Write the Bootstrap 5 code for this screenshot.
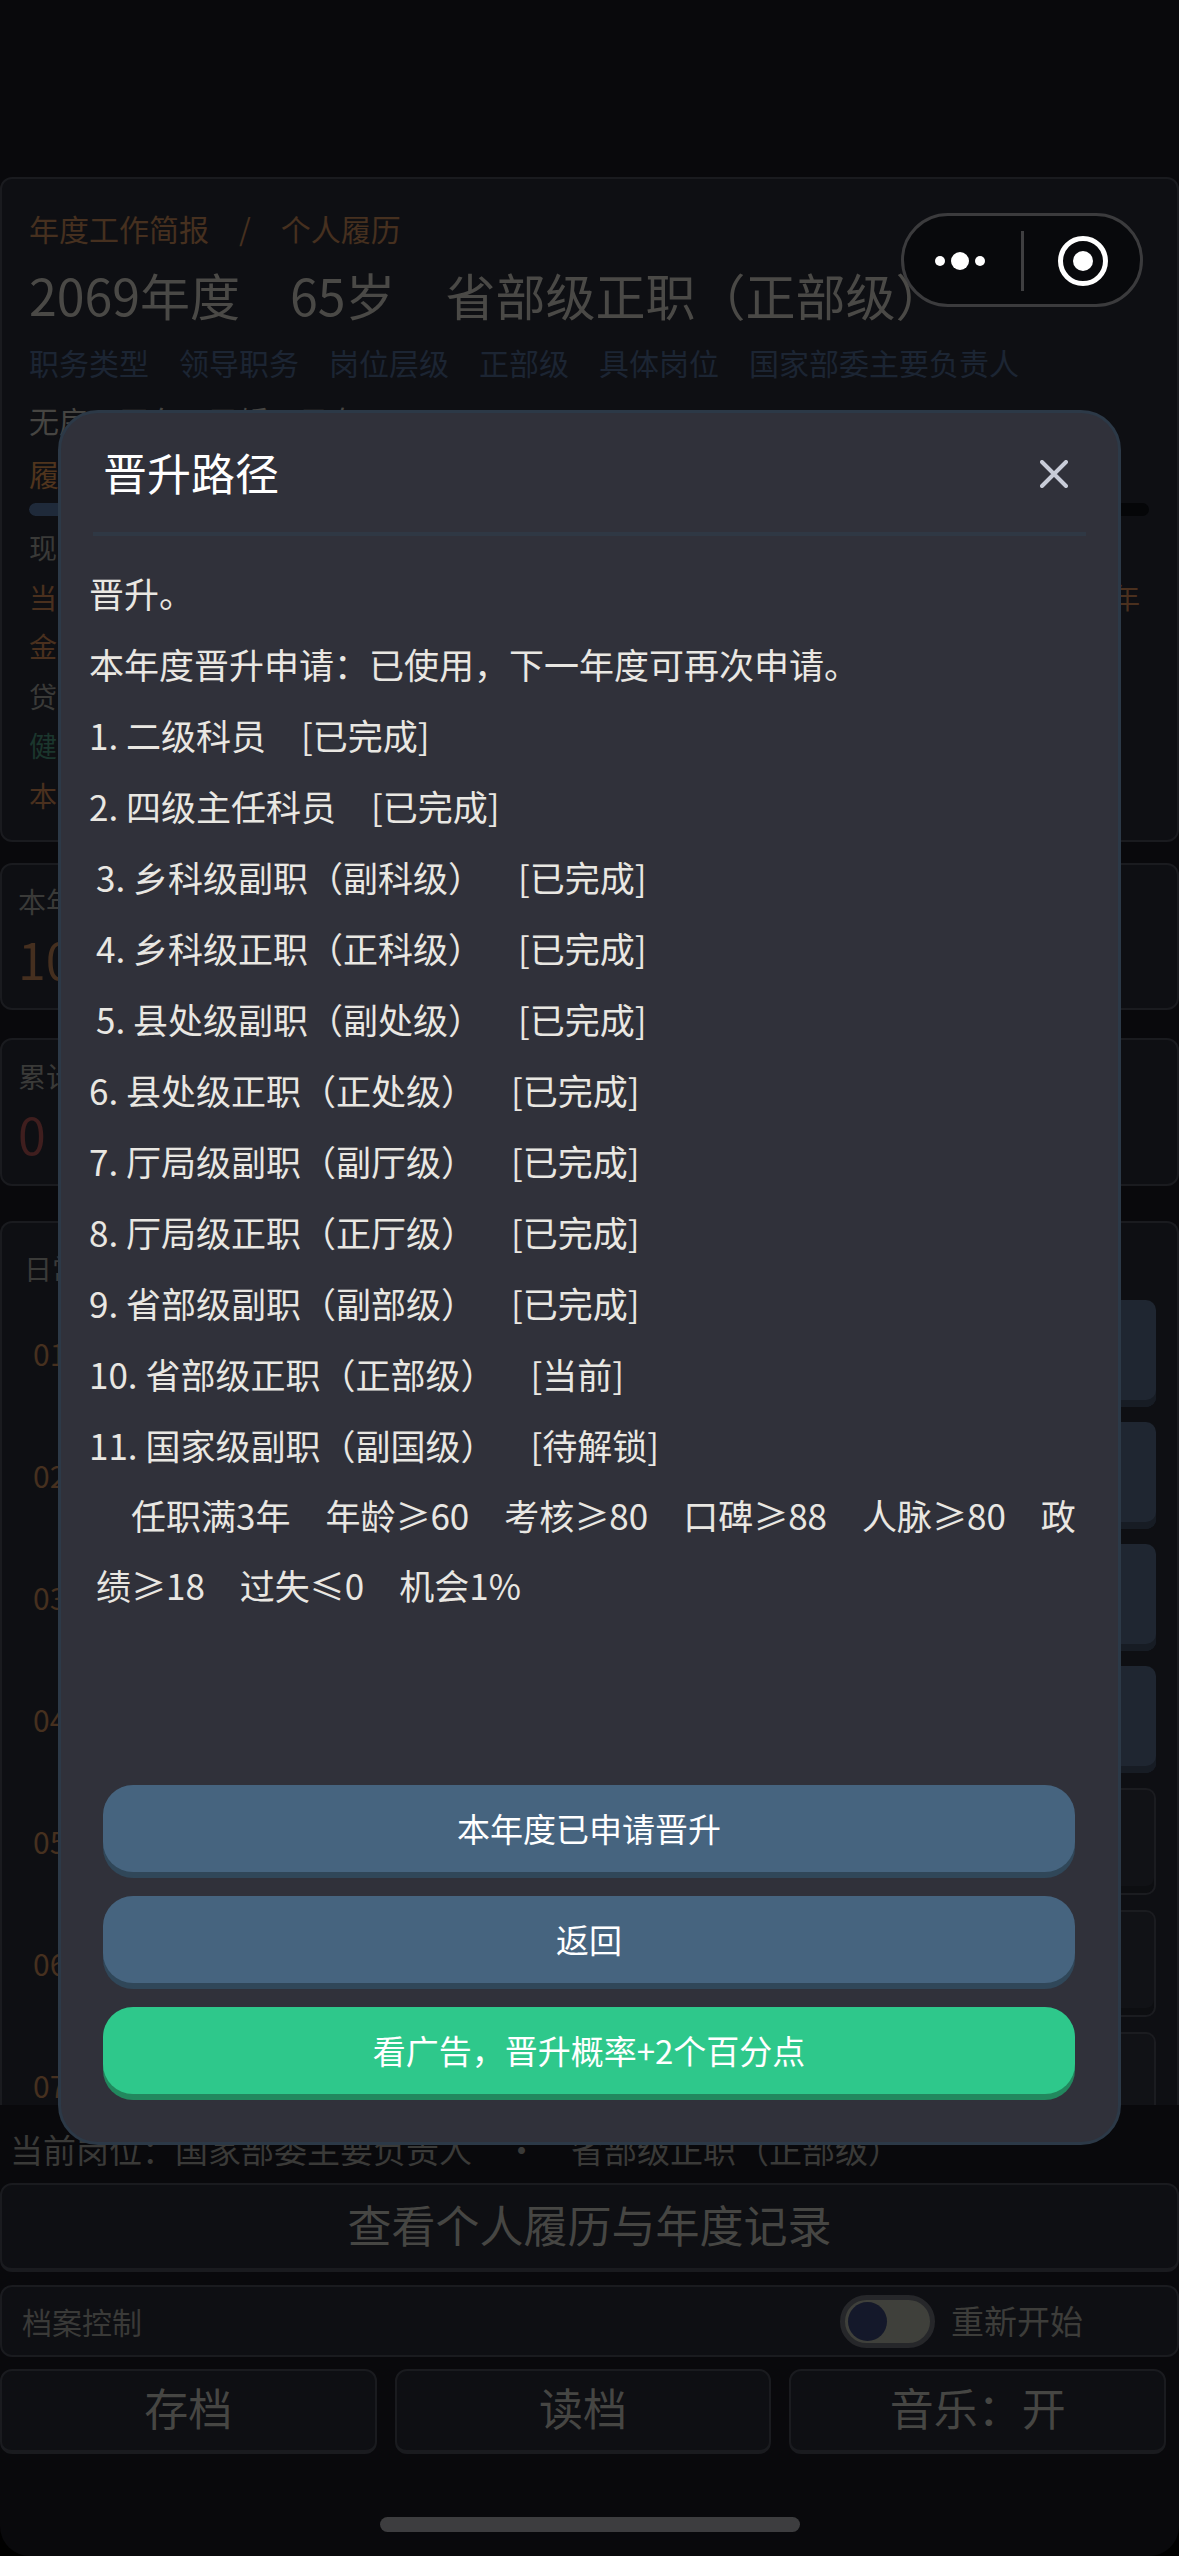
<!DOCTYPE html>
<html lang="zh-CN">
<head>
    <meta charset="UTF-8">
    <meta name="viewport" content="width=device-width, initial-scale=1.0">
    <title>晋升路径</title>
    <link href="https://cdn.jsdelivr.net/npm/bootstrap@5.3.0/dist/css/bootstrap.min.css" rel="stylesheet">
    <style>
        html { background: #000; }
        body {
            background: transparent;
            font-family: "Noto Sans CJK SC", "Noto Sans", sans-serif;
        }
        .screen {
            width: 1179px;
            height: 2556px;
            padding-top: 177px;
            background: #09090c;
            border-radius: 0 0 30px 30px;
            overflow: hidden;
            position: relative;
        }
        .dim-card {
            background: #0e0f13;
            border: 2px solid #1a1b1f;
            border-radius: 12px;
            color: #3a3a38;
        }

        /* profile card */
        .profile-box { height: 665px; padding: 26px 0 0 27px; font-size: 28px; }
        .crumb { height: 46px; line-height: 46px; font-size: 30px; color: #46301f; gap: 30px; }
        .year-head {
            height: 54px; line-height: 54px; margin-top: 16px;
            font-size: 50px; color: #4a4946; white-space: nowrap;
            position: relative; z-index: 3;
        }
        .post-meta { height: 44px; line-height: 44px; margin-top: 19px; font-size: 30px; color: #1c2533; gap: 30px; }
        .family-row { height: 44px; line-height: 44px; margin-top: 14px; font-size: 30px; color: #464542; gap: 30px; }
        .record-row { height: 44px; line-height: 44px; margin-top: 9px; font-size: 30px; color: #50341d; }
        .record-bar { height: 13px; margin: 8px 28px 7px 0; background: #050608; border-radius: 7px; }
        .record-bar-fill { height: 100%; background: #1f2a3a; border-radius: 7px; }
        .stat-row { height: 49.5px; line-height: 49.5px; padding-right: 37px; }
        .tone-amber { color: #4a301e; }
        .tone-green { color: #1b362d; }

        /* summary cards */
        .sum-box { padding: 16px 0 0 16px; font-size: 28px; }
        .sum-year { height: 147px; margin-top: 21px; }
        .sum-total { height: 148px; margin-top: 28px; }
        .sum-label { line-height: 40px; height: 40px; }
        .sum-value { line-height: 60px; height: 60px; margin-top: 7px; font-size: 50px; }
        .value-amber { color: #452f1f; }
        .value-red { color: #3f1e1e; }

        /* daily list */
        .daily-box { height: 884px; margin-top: 35px; padding: 0 21px 0 22px; overflow: hidden; font-size: 30px; border-bottom: 0; border-radius: 12px 12px 0 0; }
        .daily-title { height: 77px; padding-top: 24px; line-height: 42px; font-size: 28px; }
        .daily-rows { gap: 15px; }
        .daily-num { width: 60px; padding-left: 9px; color: #46301f; }
        .daily-btn { height: 107px; background: #1f2631; border-radius: 10px; box-shadow: inset 0 -7px 0 #171c24; }
        .daily-btn-off { background: #111216; border: 2px solid #1b1c20; box-shadow: inset 0 -7px 0 #0d0e11; }

        /* bottom controls */
        .post-line { height: 50px; line-height: 50px; margin-top: 19px; padding-left: 10px; font-size: 33px; color: #3a3a38; white-space: nowrap; }
        .resume-btn { height: 89px; line-height: 79px; margin-top: 9px; font-size: 44px; color: #464643; text-align: center; border-bottom-width: 4px; }
        .archive-box { height: 72px; margin-top: 13px; padding: 0 94px 0 20px; font-size: 30px; }
        .toggle-rim { width: 95px; height: 53px; background: #3f403b; border: 5px solid #26272a; border-radius: 27px; padding: 2px; margin-right: 16px; }
        .toggle-knob { width: 39px; height: 39px; background: #14182a; border-radius: 50%; margin-left: 1px; }
        .restart-text { font-size: 33px; color: #3d3d3a; }
        .file-row { gap: 18px; margin-top: 12px; padding-right: 13px; }
        .file-btn { height: 85px; line-height: 73px; font-size: 44px; color: #464643; text-align: center; border-bottom-width: 4px; }
        .home-bar { width: 420px; height: 15px; margin: 63px auto 0; background: #3d3d3f; border-radius: 8px; }

        /* wechat capsule */
        .capsule {
            left: 901px; top: 213px; width: 242px; height: 94px;
            background: #08090c; border: 3px solid #3b3b3d; border-radius: 47px;
            z-index: 2;
        }
        .capsule svg { display: block; }

        /* promotion modal */
        .promo-modal {
            left: 58px; top: 410px; width: 1063px; height: 1735px;
            background: #30313a; border: 3px solid #2c3947; border-radius: 40px;
            color: #e9e7e2; z-index: 5;
        }
        .promo-head { height: 123px; margin: 0 32px; padding: 0 10px; border-bottom: 4px solid #2f3844; }
        .promo-title { font-size: 44px; color: #fff; line-height: 1; margin-top: -2px; }
        .promo-close { margin-right: 8px; margin-top: 2px; }
        .promo-body { padding: 21px 0 0 28px; font-size: 35px; line-height: 71px; white-space: nowrap; }
        .promo-shift { padding-left: 7px; }
        .promo-req { padding: 0 30px 0 7px; white-space: normal; line-height: 70px; text-indent: 35px; }
        .promo-foot { padding: 0 43px 42px 42px; gap: 18px; }
        .promo-btn {
            height: 87px; margin-bottom: 6px; padding: 0;
            font-size: 33px; line-height: 87px; color: #fff;
            border: 0; border-radius: 30px;
        }
        .promo-btn-blue { background: #46647f; box-shadow: 0 6px 0 #304759; }
        .promo-btn-green { background: #2ec88b; box-shadow: 0 6px 0 #22885e; }
    </style>
</head>
<body>
<div class="screen">
    <div class="dim-card profile-box">
        <div class="crumb d-flex"><span>年度工作简报</span><span>/</span><span>个人履历</span></div>
        <div class="year-head">2069年度&emsp;65岁&emsp;省部级正职（正部级）</div>
        <div class="post-meta d-flex">
            <span>职务类型</span><span>领导职务</span><span>岗位层级</span><span>正部级</span><span>具体岗位</span><span>国家部委主要负责人</span>
        </div>
        <div class="family-row d-flex"><span>无房</span><span>无车</span><span>已婚</span><span>子女 0</span></div>
        <div class="record-row">履</div>
        <div class="record-bar"><div class="record-bar-fill w-25"></div></div>
        <div class="stat-row">现</div>
        <div class="stat-row tone-amber d-flex justify-content-between"><span>当</span><span>年</span></div>
        <div class="stat-row tone-amber">金</div>
        <div class="stat-row">贷</div>
        <div class="stat-row tone-green">健</div>
        <div class="stat-row tone-amber">本</div>
    </div>

    <div class="dim-card sum-box sum-year">
        <div class="sum-label">本年</div>
        <div class="sum-value value-amber">10</div>
    </div>
    <div class="dim-card sum-box sum-total">
        <div class="sum-label">累计</div>
        <div class="sum-value value-red">0</div>
    </div>

    <div class="dim-card daily-box">
        <div class="daily-title">日常</div>
        <div class="daily-rows d-flex flex-column" id="dailyRows"></div>
    </div>

    <div class="post-line">当前岗位：国家部委主要负责人　·　省部级正职（正部级）</div>
    <div class="dim-card resume-btn">查看个人履历与年度记录</div>
    <div class="dim-card archive-box d-flex align-items-center justify-content-between">
        <span>档案控制</span>
        <span class="d-flex align-items-center">
            <span class="toggle-rim d-flex align-items-center"><span class="toggle-knob"></span></span>
            <span class="restart-text">重新开始</span>
        </span>
    </div>
    <div class="file-row d-flex">
        <div class="dim-card file-btn flex-fill w-100">存档</div>
        <div class="dim-card file-btn flex-fill w-100">读档</div>
        <div class="dim-card file-btn flex-fill w-100">音乐：开</div>
    </div>
    <div class="home-bar"></div>

    <div class="capsule position-absolute">
        <svg width="236" height="88" viewBox="0 0 236 88">
            <circle cx="36" cy="45" r="5" fill="#fff"/>
            <circle cx="56" cy="45" r="9" fill="#fff"/>
            <circle cx="76" cy="45" r="5" fill="#fff"/>
            <rect x="117" y="15" width="3" height="60" fill="#3f3f41"/>
            <circle cx="179" cy="45" r="22.5" fill="none" stroke="#fff" stroke-width="5"/>
            <circle cx="179" cy="45" r="10" fill="#fff"/>
        </svg>
    </div>

    <div class="promo-modal position-absolute d-flex flex-column">
        <div class="promo-head d-flex align-items-center justify-content-between flex-shrink-0">
            <span class="promo-title">晋升路径</span>
            <svg class="promo-close" width="28" height="28" viewBox="0 0 28 28">
                <path d="M2 2 26 26M26 2 2 26" stroke="#c8ccd8" stroke-width="4" stroke-linecap="round"/>
            </svg>
        </div>
        <div class="promo-body flex-grow-1">
            <div>晋升。</div>
            <div>本年度晋升申请：已使用，下一年度可再次申请。</div>
            <div>1. 二级科员&emsp;[已完成]</div>
            <div>2. 四级主任科员&emsp;[已完成]</div>
            <div class="promo-shift">3. 乡科级副职（副科级）&emsp;[已完成]</div>
            <div class="promo-shift">4. 乡科级正职（正科级）&emsp;[已完成]</div>
            <div class="promo-shift">5. 县处级副职（副处级）&emsp;[已完成]</div>
            <div>6. 县处级正职（正处级）&emsp;[已完成]</div>
            <div>7. 厅局级副职（副厅级）&emsp;[已完成]</div>
            <div>8. 厅局级正职（正厅级）&emsp;[已完成]</div>
            <div>9. 省部级副职（副部级）&emsp;[已完成]</div>
            <div>10. 省部级正职（正部级）&emsp;[当前]</div>
            <div>11. 国家级副职（副国级）&emsp;[待解锁]</div>
            <div class="promo-req">任职满3年&emsp;年龄≥60&emsp;考核≥80&emsp;口碑≥88&emsp;人脉≥80&emsp;政绩≥18&emsp;过失≤0&emsp;机会1%</div>
        </div>
        <div class="promo-foot d-flex flex-column flex-shrink-0">
            <button class="btn promo-btn promo-btn-blue">本年度已申请晋升</button>
            <button class="btn promo-btn promo-btn-blue">返回</button>
            <button class="btn promo-btn promo-btn-green">看广告，晋升概率+2个百分点</button>
        </div>
    </div>
</div>
<script src="https://cdn.jsdelivr.net/npm/bootstrap@5.3.0/dist/js/bootstrap.bundle.min.js"></script>
<script>
    // first four slots are filled, the rest are still empty
    const rows = document.getElementById('dailyRows');
    for (let i = 1; i <= 7; i++) {
        const row = document.createElement('div');
        row.className = 'd-flex align-items-center';
        row.innerHTML = `<span class="daily-num flex-shrink-0">0${i}</span>
            <div class="daily-btn flex-grow-1 ${i > 4 ? 'daily-btn-off' : ''}"></div>`;
        rows.appendChild(row);
    }
</script>
</body>
</html>
